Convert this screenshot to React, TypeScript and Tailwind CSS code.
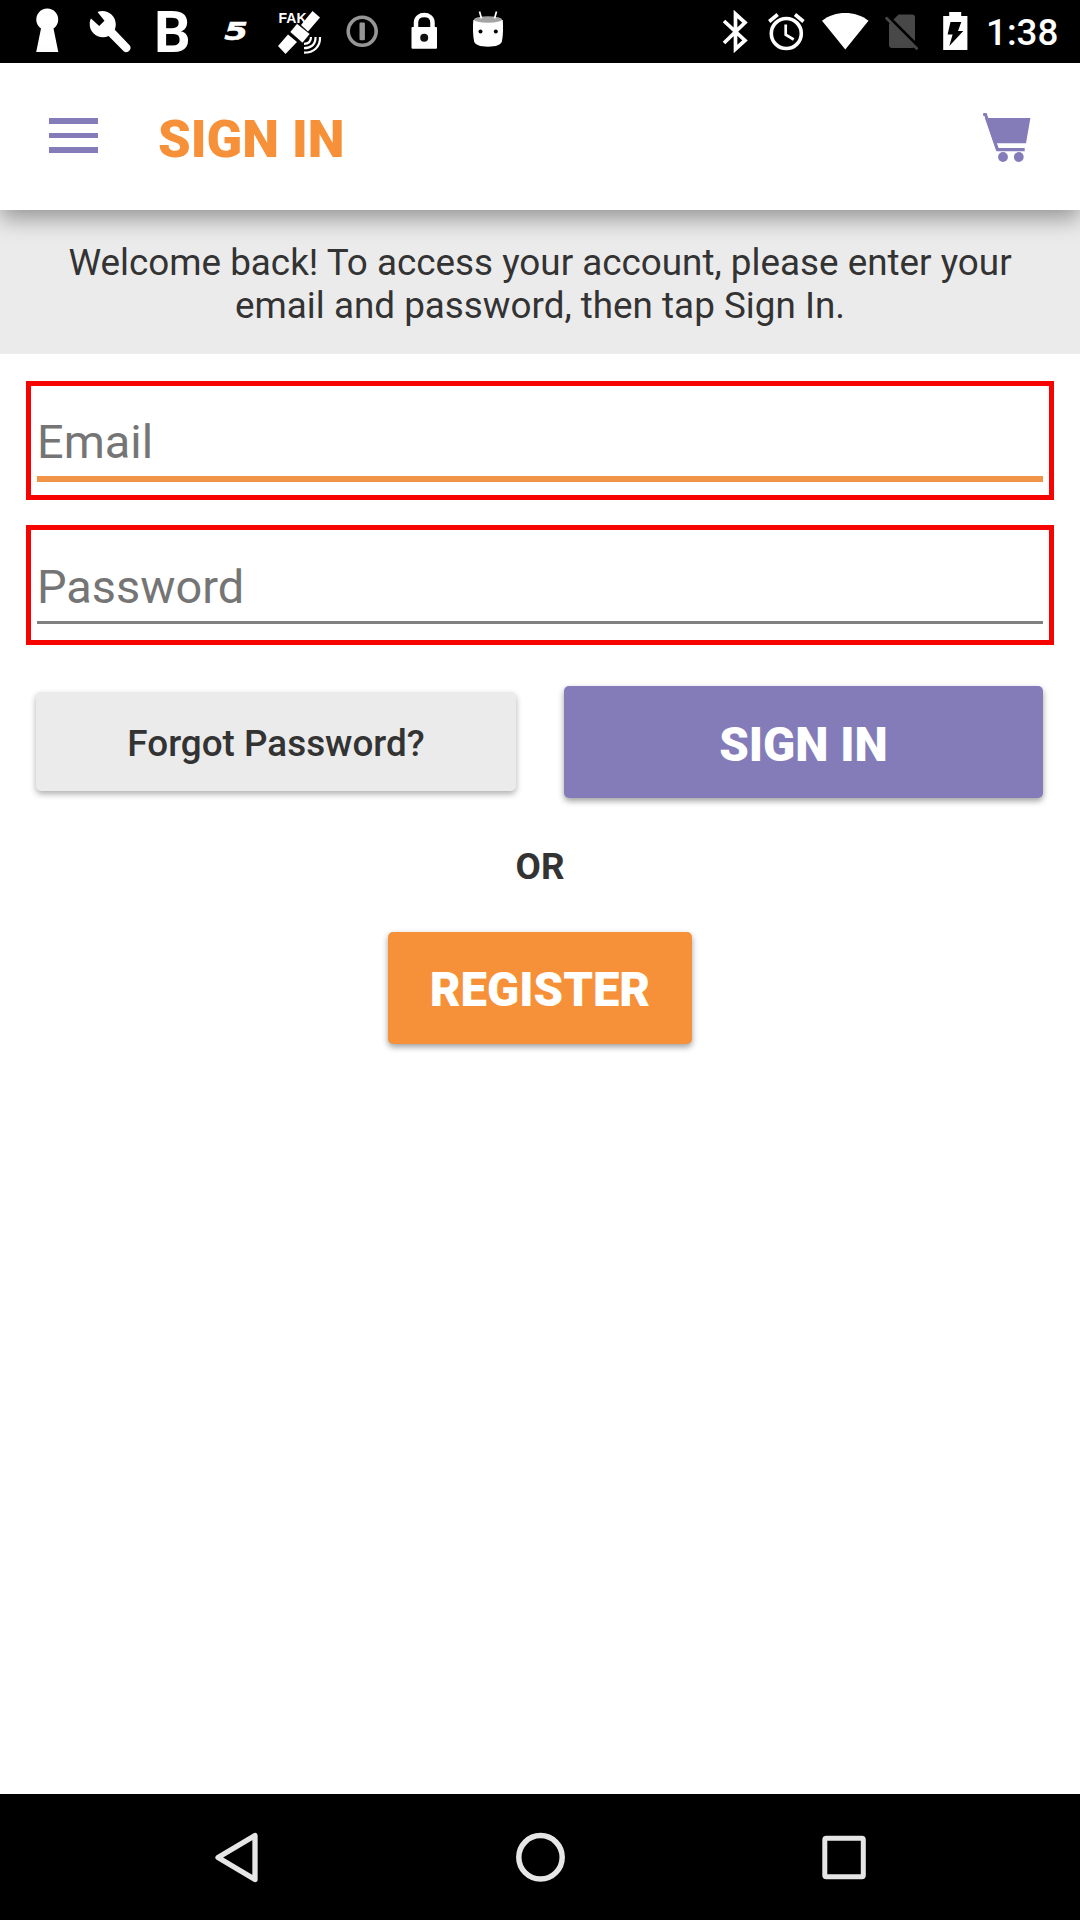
import type { ReactNode } from "react";

type IconProps = { x: number; w: number; children: ReactNode };

/** Status bar glyph; the viewBox starts at the glyph's own offset in the bar. */
function StatusIcon({ x, w, children }: IconProps) {
  return (
    <svg width={w} height={63} viewBox={`${x} 0 ${w} 63`} fill="white" className="shrink-0 overflow-visible">
      {children}
    </svg>
  );
}

function StatusBar() {
  return (
    <header className="flex h-[63px] shrink-0 bg-black pl-4 text-white">
      <StatusIcon x={16} w={63}>
        <path d="M41 28.5a11 11 0 1 1 12.500 0L58.300 52H36.200z" />
      </StatusIcon>
      <StatusIcon x={79} w={63}>
        <path d="M91 18.500l8.200 7.600 5.300-5.400-7-8.700c8-3.600 18.500 2.400 18.300 12.500-.1 2-.4 3.700-1 5.200l14.800 15.500c3.200 3.600-2.200 9.200-5.900 6L108.600 36c-9 4-19.500-2.500-18.900-12.500.1-2 .500-3.600 1.300-5z" />
      </StatusIcon>
      <StatusIcon x={142} w={63}>
        <text x="154" y="52" fontSize="57.500" fontWeight="700">B</text>
      </StatusIcon>
      <StatusIcon x={205} w={63}>
        <text transform="translate(224.300 39.700) scale(1.420 1)" fontSize="24" fontWeight="700" fontStyle="italic" stroke="white" strokeWidth=".500" className="font-['DejaVu_Sans',sans-serif]">5</text>
      </StatusIcon>
      <StatusIcon x={268} w={63}>
        <text x="278.500" y="23" fontSize="14" fontWeight="700" className="font-['Liberation_Sans',sans-serif]">FAK</text>
        <path d="M312.500 11l7.500 6.500-12 14-7-6.500z" />
        <path d="M297 23.500l13 10.500-7.500 9-12.500-11z" stroke="black" strokeWidth=".600" />
        <path d="M288 34.500l9 7.500-11.500 12-7.500-8z" />
        <path d="M311 37c0 4.500-2.500 6.800-7 6.800M315.500 37c.3 7.500-4.300 11.200-11.500 11.200M320 37c.4 9.500-6 15.700-16 15.700" fill="none" stroke="white" strokeWidth="2.200" />
      </StatusIcon>
      <StatusIcon x={331} w={63}>
        <circle cx="362.200" cy="31.300" r="14" fill="none" stroke="#969696" strokeWidth="3.600" />
        <rect x="359.500" y="22.500" width="5.400" height="17.800" rx="1.200" fill="#969696" />
      </StatusIcon>
      <StatusIcon x={394} w={63}>
        <path d="M416 28v-5.200c0-10.300 16.500-10.300 16.500 0V28" fill="none" stroke="white" strokeWidth="4.500" />
        <rect x="411.500" y="27" width="25.500" height="21.700" rx="1" />
        <circle cx="424.200" cy="37.800" r="4" fill="#111" />
      </StatusIcon>
      <StatusIcon x={457} w={63}>
        <path d="M473.300 20h29.500c.5 8 .3 15-.8 21-.8 4-6 5.700-14 5.700s-13.200-1.700-14-5.700c-1.100-6-1.300-13-.7-21z" />
        <ellipse cx="488" cy="19.500" rx="14" ry="3.200" fill="#a3a3a3" />
        <path d="M481.500 18.500l-2-7M494.500 18.500l2-7" fill="none" stroke="white" strokeWidth="1.700" />
        <circle cx="480.500" cy="31.500" r="2" fill="black" />
        <circle cx="495.800" cy="31.500" r="2" fill="black" />
      </StatusIcon>
      <div className="ml-auto flex pr-[22px]">
        <StatusIcon x={712} w={47}>
          <path d="M724 21l21 19.500-9.500 8.500V14l9.500 8.500-21 20.500" fill="none" stroke="white" strokeWidth="3.700" />
        </StatusIcon>
        <StatusIcon x={759} w={55}>
          <circle cx="786.300" cy="33.500" r="15" fill="none" stroke="white" strokeWidth="3.600" />
          <path d="M769.200 21.500l8.500-7M803.500 21.500l-8.500-7" fill="none" stroke="white" strokeWidth="3.600" />
          <path d="M785.700 24.500v10.200l8 4.800" fill="none" stroke="white" strokeWidth="2.700" />
        </StatusIcon>
        <StatusIcon x={814} w={62}>
          <path d="M822 20.700c13-10.300 33.500-10.300 46.500 0L845.300 49.500z" />
        </StatusIcon>
        <StatusIcon x={876} w={56}>
          <path d="M898.500 14.500H912q3 0 3 3V45q0 3-3 3h-20q-3 0-3-3V24z" fill="#484848" />
          <path d="M887.500 16.500L919.500 48.500" stroke="black" strokeWidth="4" />
          <path d="M885.800 17.500L917.500 49.200" stroke="#484848" strokeWidth="2.800" />
        </StatusIcon>
        <StatusIcon x={932} w={56}>
          <path d="M943.200 16h6v-4h12v4h6.200v34h-24.200z" />
          <path d="M950.500 22h10.800l-3.300 9h5.300l-14 15 3.300-11.500h-5z" fill="black" />
        </StatusIcon>
        <span className="-ml-[2px] w-[72px] whitespace-nowrap text-[36.750px] leading-[66px] font-medium">1:38</span>
      </div>
    </header>
  );
}

function AppBar() {
  return (
    <div className="relative z-10 flex h-[147px] shrink-0 items-center bg-white px-[49px] shadow-[0_8px_22px_rgba(0,0,0,0.38)]">
      <div className="mb-[2px] flex w-[49px] flex-col gap-[9px]">
        <div className="h-[5.400px] bg-[#837cb9]" />
        <div className="h-[5.400px] bg-[#837cb9]" />
        <div className="h-[5.400px] bg-[#837cb9]" />
      </div>
      <h1 className="mt-1 ml-[60px] text-[52.300px] leading-[60px] font-black text-[#f79139]">SIGN IN</h1>
      <svg width="49" height="50" viewBox="982 111 49 50" fill="#837cb9" className="ml-auto">
        <path d="M985 117H1030.400L1026 142.300H996L998 147H1024.700V150.200H996.400z" />
        <path d="M983.200 113.500h2.300l12 35" fill="none" stroke="#837cb9" strokeWidth="3" />
        <circle cx="1003" cy="156" r="4.900" />
        <circle cx="1018.800" cy="156" r="4.900" />
      </svg>
    </div>
  );
}

function NavBar() {
  return (
    <nav className="flex h-[126px] shrink-0 items-center justify-between bg-black px-[212px]">
      <svg width="50" height="56" viewBox="212 1829 50 56" fill="none" stroke="#e6e6e6" strokeWidth="5.300" strokeLinejoin="round">
        <path d="M218 1857.500L255 1835.500V1879.500Z" />
      </svg>
      <svg width="56" height="56" viewBox="512 1829 56 56" fill="none" stroke="#e6e6e6" strokeWidth="5.500">
        <circle cx="540.500" cy="1857.300" r="21.700" />
      </svg>
      <svg width="50" height="56" viewBox="818 1829 50 56" fill="none" stroke="#e6e6e6" strokeWidth="5">
        <rect x="824.800" y="1838.300" width="38.500" height="38.500" rx="1.500" />
      </svg>
    </nav>
  );
}

export default function App() {
  return (
    <div className="flex h-[1920px] w-[1080px] flex-col overflow-hidden bg-white font-['Roboto',sans-serif] text-[#333333]">
      <StatusBar />
      <AppBar />
      <p className="h-36 shrink-0 bg-[#ebebeb] pt-[31px] text-center text-[36.820px] leading-[43px]">
        Welcome back! To access your account, please enter your
        <br />
        email and password, then tap Sign In.
      </p>
      <main className="flex grow flex-col px-[26px] pt-[27px]">
        <div className="h-[119px] border-[5px] border-[#f50400] pt-[28px]">
          <div className="mx-[6px] h-[68px] border-b-[6px] border-[#f09548] text-[46.900px] leading-[55px] text-[#757575]">Email</div>
        </div>
        <div className="mt-[25px] h-[120px] border-[5px] border-[#f50400] pt-[29px]">
          <div className="mx-[6px] h-[65px] border-b-[3px] border-[#808080] text-[46.900px] leading-[55px] text-[#757575]">Password</div>
        </div>
        <div className="mt-[41px] flex items-start justify-between px-[10px] pr-[11px]">
          <button className="mt-[6px] h-[99px] w-[480px] rounded-[5px] bg-[#ebebeb] pt-[4px] text-[36.850px] font-medium shadow-[0_3px_6px_rgba(0,0,0,0.32)]">
            Forgot Password?
          </button>
          <button className="h-28 w-[479px] rounded-[5px] bg-[#837cb9] pt-[6px] text-[47.250px] font-black text-white shadow-[0_3px_6px_rgba(0,0,0,0.38)]">
            SIGN IN
          </button>
        </div>
        <div className="mt-[46px] text-center text-[36.750px] leading-[46px] font-bold">OR</div>
        <button className="mt-[42px] h-28 w-[304px] self-center rounded-[5px] bg-[#f79139] pt-[5px] text-[47.250px] font-black text-white shadow-[0_3px_6px_rgba(0,0,0,0.38)]">
          REGISTER
        </button>
      </main>
      <NavBar />
    </div>
  );
}
